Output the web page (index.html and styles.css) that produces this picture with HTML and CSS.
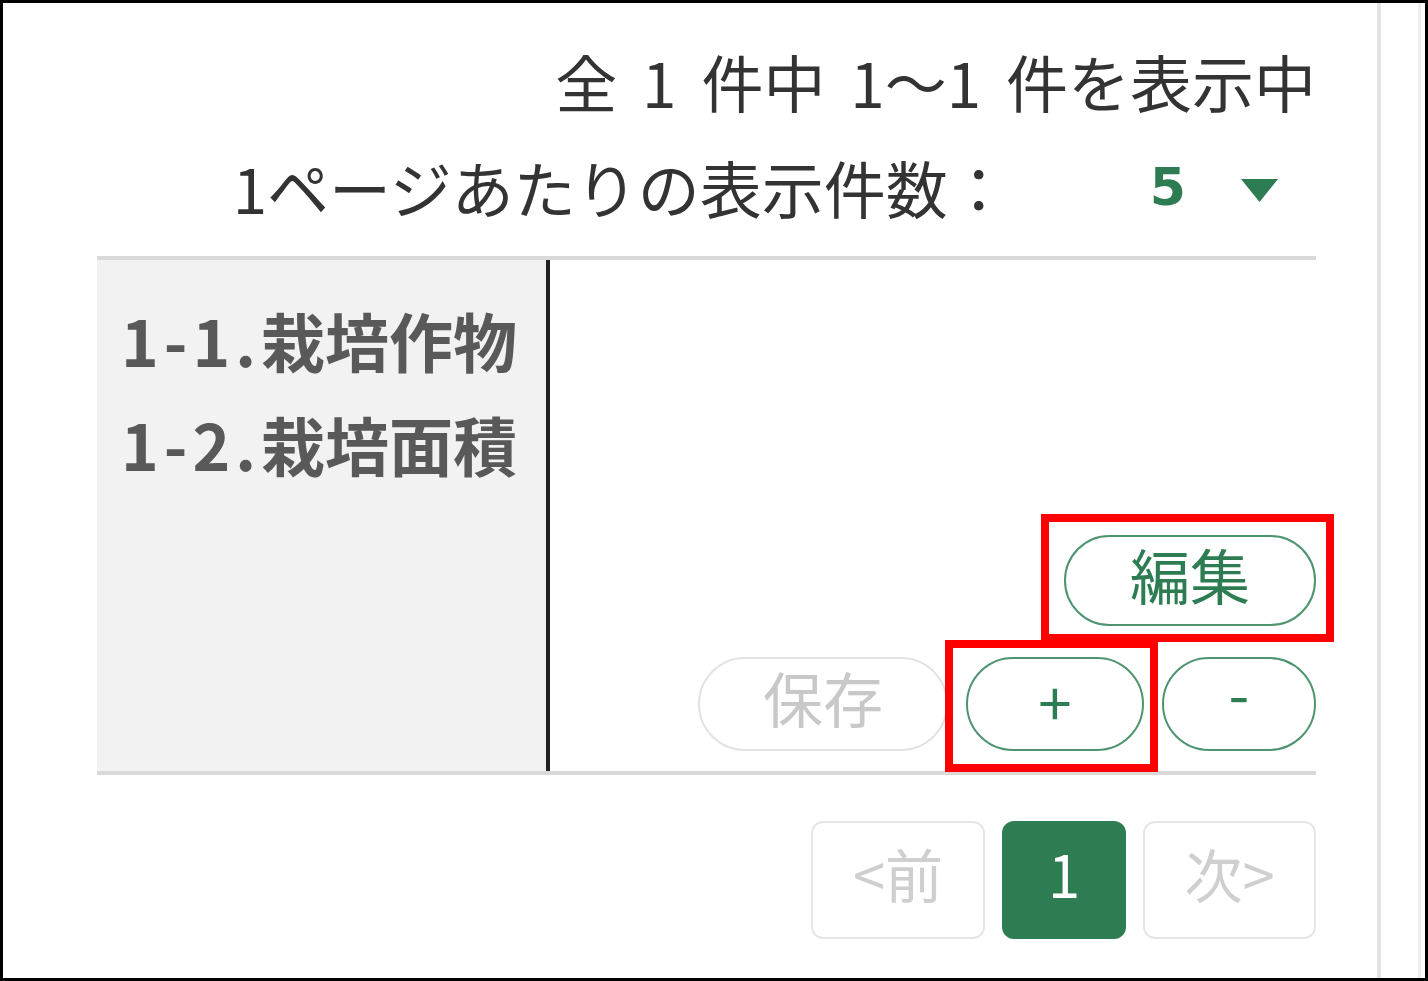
FILE: index.html
```html
<!DOCTYPE html>
<html lang="ja">
<head>
    <meta charset="UTF-8">
    <meta name="viewport" content="width=device-width, initial-scale=1.0">
    <title>栽培情報</title>
    <link rel="stylesheet" href="styles.css">
</head>
<body>
    <div class="frame">
        <div class="panel">
            <div class="summary">全 1 件中 1～1 件を表示中</div>
            <div class="per-page">
                <span class="per-label">1ページあたりの表示件数：</span>
                <span class="per-select">
                    <span class="per-value">5</span>
                    <svg class="caret" width="37" height="23" viewBox="0 0 37 23"><polygon points="0,0 37,0 18.5,23" fill="#2e7d52"/></svg>
                </span>
            </div>

            <div class="detail">
                <div class="detail-head">
                    <div class="head-item"><span class="num">1-1.</span>栽培作物</div>
                    <div class="head-item"><span class="num">1-2.</span>栽培面積</div>
                </div>
                <div class="detail-body">
                    <div class="btn-row">
                        <button class="pill edit">編集</button>
                    </div>
                    <div class="btn-row">
                        <button class="pill save" disabled>保存</button>
                        <button class="pill add">+</button>
                        <button class="pill remove">-</button>
                    </div>
                    <span class="mark mark-edit"></span>
                    <span class="mark mark-add"></span>
                </div>
            </div>

            <div class="pager">
                <button class="page prev">&lt;前</button>
                <button class="page current">1</button>
                <button class="page next">次&gt;</button>
            </div>
        </div>
        <div class="side"></div>
    </div>
</body>
</html>
```

FILE: styles.css
```css
body {
    margin: 0;
    font-family: "Noto Sans CJK JP", "Noto Sans", sans-serif;
    color: #333;
    background: #fff;
}
.frame {
    width: 1428px;
    height: 981px;
    box-sizing: border-box;
    border: 3px solid #000;
    display: flex;
}
.panel {
    width: 1378px;
    box-sizing: border-box;
    border-right: 4px solid #e3e3e3;
    padding: 0 61px 0 94px;
}
.side {
    width: 40px;
    box-sizing: border-box;
    border-right: 3px solid #eeeeee;
}
.summary {
    margin-top: 43px;
    font-size: 62px;
    line-height: 70px;
    word-spacing: 11px;
    text-align: right;
}
.per-page {
    margin-top: 36px;
    display: flex;
    justify-content: flex-end;
    align-items: center;
    font-size: 62px;
    line-height: 70px;
}
.per-select {
    display: flex;
    align-items: center;
    gap: 55px;
    padding: 0 38px 0 140px;
}
.per-value {
    font-family: "DejaVu Sans", sans-serif;
    font-weight: bold;
    font-size: 52px;
    color: #2e7d52;
}
.caret {
    margin-top: 6px;
}
.detail {
    margin-top: 34px;
    display: flex;
    height: 519px;
    box-sizing: border-box;
    border-top: 4px solid #d9d9d9;
    border-bottom: 4px solid #d9d9d9;
}
.detail-head {
    width: 453px;
    box-sizing: border-box;
    background: #f2f2f2;
    border-right: 4px solid #222;
    padding: 27px 0 0 24px;
    font-size: 64px;
    line-height: 104px;
    font-weight: bold;
    color: #595959;
}
.head-item .num {
    letter-spacing: 5px;
}
.detail-body {
    flex: 1;
    position: relative;
    display: flex;
    flex-direction: column;
    align-items: flex-end;
    justify-content: flex-end;
    gap: 31px;
    padding-bottom: 20px;
}
.btn-row {
    display: flex;
    gap: 18px;
}
.pill {
    font-family: "Noto Sans CJK JP", sans-serif;
    font-size: 60px;
    height: 94px;
    padding: 0 0 14px;
    background: #fff;
    border: 2px solid #4f9470;
    border-radius: 47px;
    color: #2e7d52;
    line-height: 1;
}
.edit {
    width: 252px;
    height: 91px;
}
.save {
    width: 250px;
    border-color: #e2e2e2;
    color: #c8c8c8;
}
.add {
    width: 178px;
    padding-bottom: 8px;
}
.remove {
    width: 154px;
    padding-bottom: 26px;
}
.mark {
    position: absolute;
    border: 8px solid #ff0000;
    box-sizing: border-box;
}
.mark-edit {
    left: 491px;
    top: 254px;
    width: 293px;
    height: 128px;
}
.mark-add {
    left: 395px;
    top: 380px;
    width: 213px;
    height: 132px;
}
.pager {
    margin-top: 46px;
    display: flex;
    justify-content: flex-end;
    gap: 17px;
}
.page {
    font-family: "Noto Sans CJK JP", sans-serif;
    font-size: 58px;
    height: 118px;
    background: #fff;
    border: 2px solid #e6e6e6;
    border-radius: 12px;
    color: #cfcfcf;
    padding: 0 0 14px;
}
.prev {
    width: 174px;
}
.current {
    width: 124px;
    background: #2e7d52;
    border-color: #2e7d52;
    color: #fff;
}
.next {
    width: 173px;
}
```
